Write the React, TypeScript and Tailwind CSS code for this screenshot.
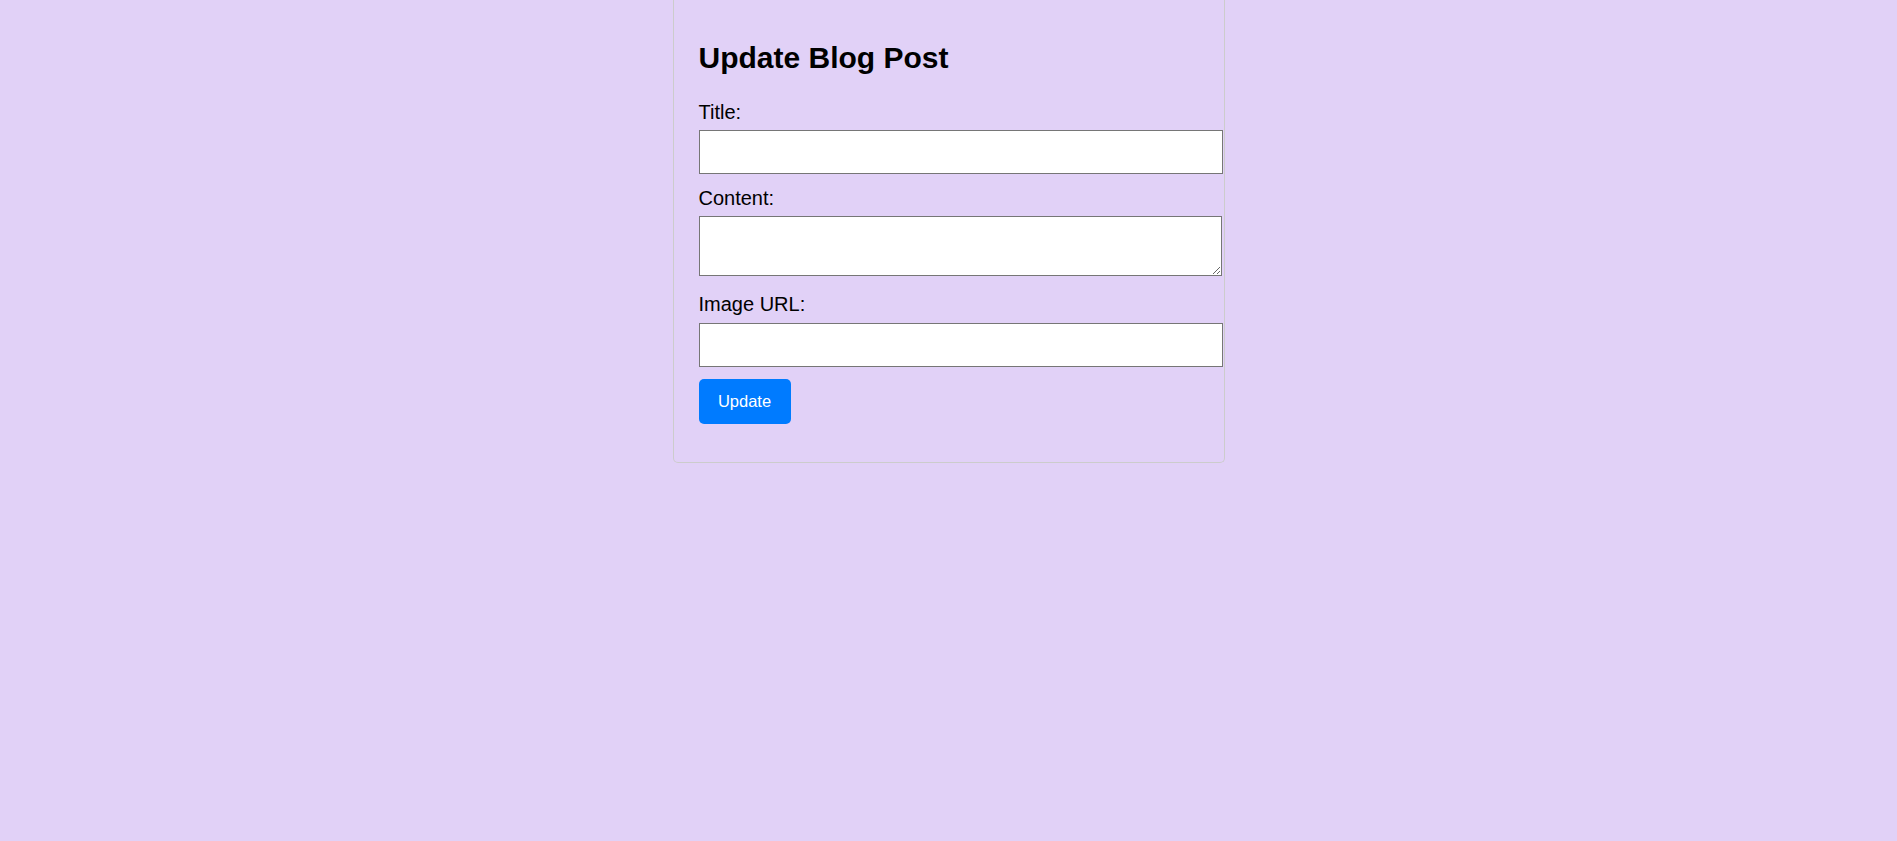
import React from "react";

export default function App() {
  return (
    <div className="min-h-screen w-full bg-[#e1d1f7] font-['Liberation_Sans',Arial,sans-serif] text-black">
      <div className="mx-auto w-[552px] border border-t-0 border-[#cccccc] rounded-b-[5px] px-[25px] pt-[41px] pb-[38px]">
        <h2 className="text-[30px] leading-[34px] font-bold">Update Blog Post</h2>
        <form className="flex flex-col items-start" onSubmit={(e) => e.preventDefault()}>
          <label className="mt-[26px] text-[20px] leading-[23px]">Title:</label>
          <input
            type="text"
            className="mt-[6px] h-[44px] w-[524px] shrink-0 border border-[#767676] bg-white px-[10px] text-[20px]"
          />
          <label className="mt-[13px] text-[20px] leading-[23px]">Content:</label>
          <textarea className="mt-[6px] h-[60px] w-[523px] shrink-0 border border-[#767676] bg-white px-[10px] text-[20px]" />
          <label className="mt-[17px] text-[20px] leading-[23px]">Image URL:</label>
          <input
            type="text"
            className="mt-[7px] h-[44px] w-[524px] shrink-0 border border-[#767676] bg-white px-[10px] text-[20px]"
          />
          <button
            type="submit"
            className="mt-[12px] h-[45px] w-[92px] rounded-[5px] bg-[#007bff] text-[16.5px] text-white"
          >
            Update
          </button>
        </form>
      </div>
    </div>
  );
}
